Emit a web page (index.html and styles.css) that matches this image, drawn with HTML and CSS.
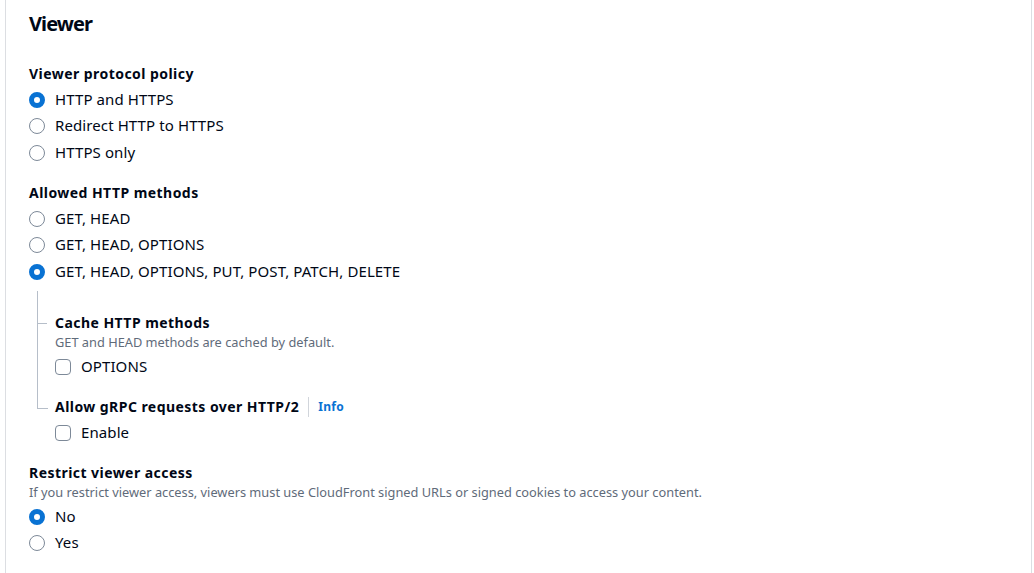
FILE: index.html
```html
<!DOCTYPE html>
<html lang="en">
<head>
    <meta charset="UTF-8">
    <meta name="viewport" content="width=device-width, initial-scale=1.0">
    <title>Viewer settings</title>
    <link rel="stylesheet" href="styles.css">
</head>
<body>
    <div class="container">
        <h2>Viewer</h2>

        <!-- Viewer protocol policy -->
        <div class="field">
            <div class="label">Viewer protocol policy</div>
            <div class="radio-group">
                <div class="radio checked"><span class="dot"></span>HTTP and HTTPS</div>
                <div class="radio"><span class="dot"></span>Redirect HTTP to HTTPS</div>
                <div class="radio"><span class="dot"></span>HTTPS only</div>
            </div>
        </div>

        <!-- Allowed HTTP methods -->
        <div class="field">
            <div class="label">Allowed HTTP methods</div>
            <div class="radio-group">
                <div class="radio"><span class="dot"></span>GET, HEAD</div>
                <div class="radio"><span class="dot"></span>GET, HEAD, OPTIONS</div>
                <div class="radio checked"><span class="dot"></span>GET, HEAD, OPTIONS, PUT, POST, PATCH, DELETE</div>
            </div>

            <div class="tree">
                <div class="tree-item first">
                    <div class="label">Cache HTTP methods</div>
                    <div class="desc">GET and HEAD methods are cached by default.</div>
                    <div class="checkbox"><span class="box"></span>OPTIONS</div>
                </div>
                <div class="tree-item last">
                    <div class="label">Allow gRPC requests over HTTP/2<span class="info">Info</span></div>
                    <div class="checkbox"><span class="box"></span>Enable</div>
                </div>
            </div>
        </div>

        <!-- Restrict viewer access -->
        <div class="field">
            <div class="label">Restrict viewer access</div>
            <div class="desc">If you restrict viewer access, viewers must use CloudFront signed URLs or signed cookies to access your content.</div>
            <div class="radio-group">
                <div class="radio checked"><span class="dot"></span>No</div>
                <div class="radio"><span class="dot"></span>Yes</div>
            </div>
        </div>
    </div>
</body>
</html>
```
FILE: styles.css
```css
* {
    margin: 0;
    padding: 0;
    box-sizing: border-box;
}

body {
    font-family: "Noto Sans", "Open Sans", sans-serif;
    font-size: 15px;
    line-height: 22px;
    color: #000716;
    background: #ffffff;
    overflow: hidden;
}

.container {
    margin: -20px 2px 0 5px;
    padding: 31px 23px 40px 23px;
    border: 1px solid #dcdee2;
    border-radius: 16px;
    height: 640px;
}

h2 {
    font-size: 20px;
    line-height: 24px;
    font-weight: 700;
    letter-spacing: -0.9px;
}

.field {
    margin-top: 18px;
}

.container h2 + .field {
    margin-top: 27px;
}

.label {
    font-size: 14px;
    font-weight: 700;
    letter-spacing: 0.45px;
    display: flex;
    align-items: center;
}

.desc {
    font-size: 12.8px;
    line-height: 16px;
    color: #5f6b7a;
}

.radio-group {
    margin-top: 4px;
    display: flex;
    flex-direction: column;
    gap: 4.4px;
}

.desc + .radio-group {
    margin-top: 6px;
}

.radio,
.checkbox {
    display: flex;
    align-items: center;
    gap: 10px;
    height: 22px;
    padding-bottom: 2px;
    letter-spacing: 0.1px;
}

.dot {
    width: 16px;
    height: 16px;
    margin-top: 2px;
    border-radius: 50%;
    border: 1.5px solid #7d8998;
    background: #ffffff;
    flex-shrink: 0;
}

.radio.checked .dot {
    border: 5px solid #0972d3;
}

.box {
    width: 16px;
    height: 16px;
    margin-top: 2px;
    border-radius: 4px;
    border: 1.5px solid #7d8998;
    flex-shrink: 0;
}

.checkbox {
    margin-top: 6px;
}

.tree-item .label + .checkbox {
    margin-top: 4px;
}

.info {
    font-size: 12px;
    font-weight: 700;
    letter-spacing: 0.3px;
    color: #0972d3;
    margin-left: 9px;
    padding-left: 9px;
    border-left: 1px solid #d1d5db;
    line-height: 20px;
}

/* tree connector lines */
.tree {
    margin: 8px 0 0 8px;
}

.tree-item {
    position: relative;
    padding-left: 18px;
}

.tree-item.first {
    padding-top: 21px;
}

.tree-item.last {
    padding-top: 18px;
}

.tree-item.first::before {
    content: "";
    position: absolute;
    left: 0;
    top: 0;
    bottom: 0;
    border-left: 1px solid #b6bec9;
}

.tree-item.first::after {
    content: "";
    position: absolute;
    left: 0;
    top: 32px;
    width: 10px;
    border-top: 1px solid #b6bec9;
}

.tree-item.last::before {
    content: "";
    position: absolute;
    left: 0;
    top: 0;
    width: 10px;
    height: 30px;
    border-left: 1px solid #b6bec9;
    border-bottom: 1px solid #b6bec9;
}
```
